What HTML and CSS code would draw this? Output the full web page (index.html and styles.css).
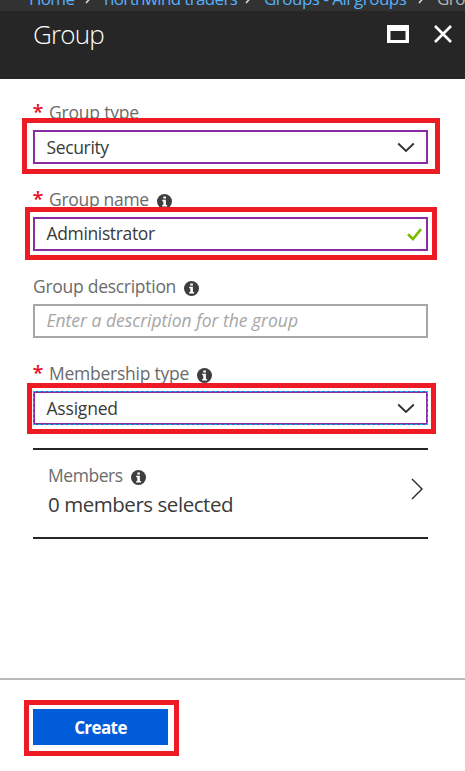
FILE: index.html
```html
<!DOCTYPE html>
<html lang="en">
<head>
<meta charset="utf-8">
<title>Group</title>
<link rel="stylesheet" href="styles.css">
</head>
<body>
<svg width="0" height="0" class="defs">
  <symbol id="info" viewBox="0 0 15 15"><circle cx="7.5" cy="7.5" r="7.5" fill="#3e3e3e"/><path d="M6.3 2.4h2.6v2.2H6.3zM5.2 5.7h3.7v5.2h1.2v1.6H5.2v-1.6h1.1V7.2H5.2z" fill="#fff"/></symbol>
  <symbol id="down" viewBox="0 0 18 11"><path d="M1.2 1.5 9 8.9l7.8-7.4" fill="none" stroke="#333" stroke-width="1.9"/></symbol>
  <symbol id="sep" viewBox="0 0 7 12"><path d="M1 1l4.5 5L1 11" fill="none" stroke="#ddd" stroke-width="1.5"/></symbol>
</svg>
<nav class="crumbs">
  <a class="home">Home</a><svg class="sep"><use href="#sep"/></svg>
  <a class="org">northwind traders</a><svg class="sep"><use href="#sep"/></svg>
  <a class="all">Groups - All groups</a><svg class="sep"><use href="#sep"/></svg>
  <span class="current">Group</span>
</nav>
<header class="header">
  <h1>Group</h1>
  <svg class="maximize" viewBox="0 0 22 18"><path d="M0 0h22v18H0zM3.5 6v9h15V6z" fill="#fff" fill-rule="evenodd"/></svg>
  <svg class="close" viewBox="0 0 18 18"><path d="M1 1l16 16M17 1L1 17" stroke="#fff" stroke-width="2.6"/></svg>
</header>
<main class="form">
  <div class="field">
    <div class="label"><b>*</b><span class="l-type">Group type</span></div>
    <div class="box active"><span class="v-sec">Security</span><svg class="down"><use href="#down"/></svg></div>
    <i class="mark mark-type"></i>
  </div>
  <div class="field">
    <div class="label"><b>*</b><span class="l-name">Group name</span><svg class="info"><use href="#info"/></svg></div>
    <div class="box active input"><span class="v-adm">Administrator</span><svg class="check" viewBox="0 0 15 13"><path d="M1 6.2 6 11 14 1.2" fill="none" stroke="#7fba00" stroke-width="2.7"/></svg></div>
    <i class="mark mark-name"></i>
  </div>
  <div class="field">
    <div class="label"><span class="l-desc">Group description</span><svg class="info"><use href="#info"/></svg></div>
    <div class="box input"><span class="placeholder">Enter a description for the group</span></div>
  </div>
  <div class="field">
    <div class="label"><b>*</b><span class="l-mem">Membership type</span><svg class="info"><use href="#info"/></svg></div>
    <div class="box focused"><span class="v-ass">Assigned</span><svg class="down"><use href="#down"/></svg></div>
    <i class="mark mark-membership"></i>
  </div>
  <section class="members">
    <div>
      <div class="label"><span class="l-members">Members</span><svg class="info"><use href="#info"/></svg></div>
      <div class="count">0 members selected</div>
    </div>
    <svg class="right" viewBox="0 0 12 22"><path d="M1 1l10 10L1 21" fill="none" stroke="#262626" stroke-width="1.4"/></svg>
  </section>
</main>
<footer class="footer">
  <div class="action"><button>Create</button><i class="mark mark-create"></i></div>
</footer>
</body>
</html>
```
FILE: styles.css
```css
* { box-sizing: border-box; }
body {
  margin: 0;
  height: 771px;
  display: flex;
  flex-direction: column;
  overflow: hidden;
  background: #fff;
  font-family: "Open Sans", "Noto Sans", sans-serif;
  font-size: 17.5px;
  letter-spacing: -0.27px;
}
svg { display: block; flex: none; }
.defs { position: absolute; }
.crumbs {
  height: 11px;
  display: flex;
  align-items: flex-end;
  padding: 0 0 0 29px;
  overflow: hidden;
  background: #323232;
  color: #56b0fa;
  font-size: 17px;
  line-height: 24px;
  white-space: nowrap;
}
.crumbs a, .crumbs span { flex: none; }
.home { width: 56px; letter-spacing: -0.7px; }
.org { width: 141px; letter-spacing: -0.8px; }
.org { letter-spacing: -0.65px; }
.all { width: 154px; letter-spacing: -0.5px; }
.current { color: #b5b5b5; letter-spacing: -0.5px; }
.sep { width: 7px; height: 12px; margin: 0 12px 7px 0; }
.header {
  height: 68px;
  display: flex;
  align-items: flex-start;
  padding: 0 13px 0 33px;
  background: #262626;
}
h1 {
  flex: 1;
  margin: 5px 0 0;
  color: #fff;
  font-size: 26px;
  font-weight: 300;
  line-height: 36px;
  letter-spacing: -0.8px;
}
.maximize { width: 22px; height: 18px; margin: 14px 25px 0 0; }
.close { width: 18px; height: 18px; margin-top: 14px; }
.form {
  flex: 1;
  display: flex;
  flex-direction: column;
  gap: 23px;
  padding: 21px 37px 0 33px;
}
.field { position: relative; }
.label {
  height: 24px;
  display: flex;
  align-items: flex-start;
  margin-bottom: 6px;
  color: #6b6b6b;
  line-height: 25px;
  white-space: nowrap;
}
.label b { width: 16.5px; margin-left: -0.5px; color: #e81123; font-size: 20px; font-weight: 600; line-height: 24px; }
.l-type { letter-spacing: -0.2px; }
.l-name { letter-spacing: -0.3px; }
.l-mem { letter-spacing: -0.25px; }
.l-desc { letter-spacing: -0.28px; }
.l-members { letter-spacing: -0.45px; }
.info { width: 15px; height: 15px; margin: 7px 0 0 8px; }
.box {
  height: 34px;
  display: flex;
  align-items: center;
  justify-content: space-between;
  padding: 0 11px 1px 11.5px;
  border: 2px solid #a6a6a6;
  color: #3a3a3a;
  line-height: 24px;
  white-space: nowrap;
}
.input span { margin-top: -2px; }
.v-sec, .v-adm { letter-spacing: -0.36px; }
.v-ass { letter-spacing: -0.2px; }
.active { border-color: #8a2da5; }
.focused { border-color: #8a2da5; outline: 1px dashed #00b7f0; outline-offset: -1px; }
.placeholder { color: #a6a6a6; font-style: italic; letter-spacing: -0.01px; }
.down { width: 18px; height: 11px; margin-top: 2px; }
.check { width: 15px; height: 13px; margin: 2px -7px 0 0; }
.mark { position: absolute; border: 5px solid #ed1c24; }
.mark-type { inset: 18px -12px -10px -11px; }
.mark-name { inset: 20px -9px -9px -8px; }
.mark-membership { inset: 22px -8px -9px -6px; }
.mark-create { inset: -9px -11px -11px -9px; }
.members {
  height: 91px;
  display: flex;
  justify-content: space-between;
  padding: 15px 5px 0 15px;
  border: solid #262626;
  border-width: 2px 0;
}
.members .label { margin-bottom: 1px; }
.members .info { margin-top: 5px; }
.members .label span { margin-top: -2px; }
.count { color: #3a3a3a; font-size: 20.5px; line-height: 28px; letter-spacing: -0.45px; }
.right { width: 12px; height: 22px; margin-top: 13px; }
.footer { height: 93px; padding: 29px 33px; border-top: 2px solid #bababa; }
.action { position: relative; width: 135px; }
button {
  display: block;
  width: 135px;
  height: 36px;
  padding: 1px 0 0;
  border: 0;
  background: #015cda;
  color: #fff;
  font: 700 17px/36px "Open Sans", sans-serif;
  letter-spacing: -0.6px;
}
```
